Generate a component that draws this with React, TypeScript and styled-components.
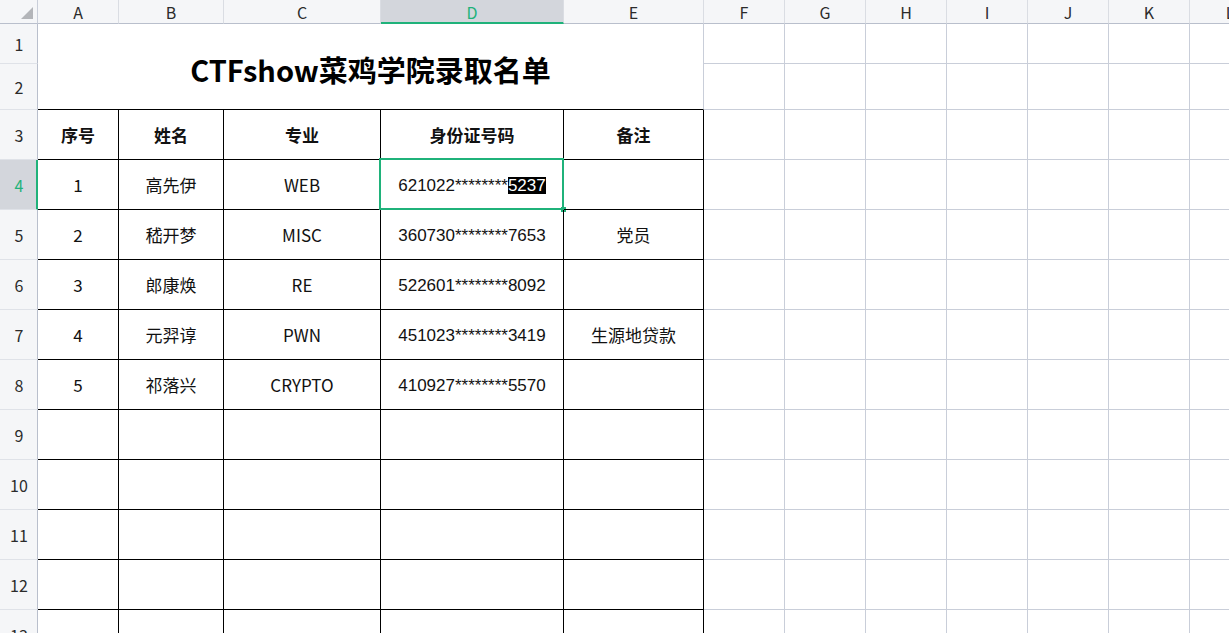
import React from "react";
import styled, { createGlobalStyle } from "styled-components";

const GREEN = "#1fb27a";
const GRID = "#c9ced9";
const HEAD_BG = "#f5f6f8";
const HEAD_ACTIVE = "#d3d6dc";

const GlobalStyle = createGlobalStyle`
  html, body { margin: 0; padding: 0; background: #fff; overflow: hidden; }
  body { font-family: "Noto Sans CJK SC", "Noto Sans", sans-serif; color: #000; }
  * { box-sizing: border-box; }
`;

const COLUMNS = [
  { key: "A", w: 81 },
  { key: "B", w: 105 },
  { key: "C", w: 157 },
  { key: "D", w: 183 },
  { key: "E", w: 140 },
  { key: "F", w: 81 },
  { key: "G", w: 81 },
  { key: "H", w: 81 },
  { key: "I", w: 81 },
  { key: "J", w: 81 },
  { key: "K", w: 81 },
  { key: "L", w: 81 },
];

const Sheet = styled.div`
  width: 1229px;
  height: 633px;
  overflow: hidden;
  display: grid;
  grid-template-columns: 38px ${COLUMNS.map((c) => `${c.w}px`).join(" ")};
  grid-template-rows: 24px 40px 46px repeat(11, 50px);
`;

const Corner = styled.div`
  background: ${HEAD_BG};
  border-right: 1px solid ${GRID};
  border-bottom: 1px solid #b9bfcc;
  display: flex;
  align-items: flex-end;
  justify-content: flex-end;
  padding: 0 4px 4px 0;
`;

const ColHeader = styled.div<{ $active?: boolean }>`
  background: ${(p) => (p.$active ? HEAD_ACTIVE : HEAD_BG)};
  border-right: 1px solid #dadde3;
  border-bottom: ${(p) => (p.$active ? `2px solid ${GREEN}` : "1px solid #b9bfcc")};
  color: ${(p) => (p.$active ? GREEN : "#2b2b2b")};
  font-size: 16px;
  display: flex;
  align-items: center;
  justify-content: center;
  padding-top: 1px;
  line-height: 1;
`;

const RowHeader = styled.div<{ $active?: boolean }>`
  background: ${(p) => (p.$active ? HEAD_ACTIVE : HEAD_BG)};
  border-right: ${(p) => (p.$active ? `2px solid ${GREEN}` : "1px solid #b9bfcc")};
  border-bottom: 1px solid #dfe2e8;
  color: ${(p) => (p.$active ? GREEN : "#2b2b2b")};
  font-size: 16px;
  display: flex;
  align-items: center;
  justify-content: center;
  padding-left: ${(p) => (p.$active ? "2px" : "1px")};
`;

const Cell = styled.div<{ $table?: boolean; $bold?: boolean }>`
  position: relative;
  border-right: 1px solid ${(p) => (p.$table ? "#000" : GRID)};
  border-bottom: 1px solid ${(p) => (p.$table ? "#000" : GRID)};
  display: flex;
  align-items: center;
  justify-content: center;
  font-size: 17px;
  font-weight: ${(p) => (p.$bold ? 700 : 400)};
  color: #111;
  white-space: nowrap;
`;

const IdText = styled.span`
  font-family: "Liberation Sans", "Noto Sans CJK SC", sans-serif;
  font-size: 17px;
  display: inline-flex;
  align-items: center;
  padding-top: 2px;
`;

const TitleCell = styled.div`
  grid-column: span 5;
  grid-row: span 2;
  border-right: 1px solid ${GRID};
  border-bottom: 1px solid #000;
  display: flex;
  align-items: center;
  justify-content: center;
  font-size: 29px;
  font-weight: 700;
  color: #000;
  padding-top: 4px;
`;

const Selection = styled.div`
  position: absolute;
  left: -2px;
  top: -2px;
  right: -1px;
  bottom: -1px;
  border: 2px solid ${GREEN};
  pointer-events: none;
`;

const Handle = styled.div`
  position: absolute;
  right: -4px;
  bottom: -4px;
  width: 5px;
  height: 5px;
  background: ${GREEN};
`;

const Highlight = styled.span`
  display: inline-block;
  background: #000;
  color: #fff;
  line-height: 17px;
  height: 17px;
`;

const HEADERS = ["序号", "姓名", "专业", "身份证号码", "备注"];

const DATA = [
  ["1", "高先伊", "WEB", "621022********5237", ""],
  ["2", "嵇开梦", "MISC", "360730********7653", "党员"],
  ["3", "郎康焕", "RE", "522601********8092", ""],
  ["4", "元羿谆", "PWN", "451023********3419", "生源地贷款"],
  ["5", "祁落兴", "CRYPTO", "410927********5570", ""],
];

const EXTRA_COLS = COLUMNS.slice(5);

function GridCells() {
  return (
    <>
      {EXTRA_COLS.map((c) => (
        <Cell key={c.key} />
      ))}
    </>
  );
}

export default function App() {
  const tableRows: string[][] = [];
  for (let i = 0; i < 10; i++) {
    tableRows.push(i < DATA.length ? DATA[i] : ["", "", "", "", ""]);
  }

  return (
    <>
      <GlobalStyle />
      <Sheet>
        <Corner>
          <svg width="12" height="12" viewBox="0 0 12 12">
            <polygon points="12,0 12,12 0,12" fill="#b3b5b9" />
          </svg>
        </Corner>
        {COLUMNS.map((c) => (
          <ColHeader key={c.key} $active={c.key === "D"}>
            {c.key}
          </ColHeader>
        ))}

        <RowHeader>1</RowHeader>
        <TitleCell>CTFshow菜鸡学院录取名单</TitleCell>
        <GridCells />

        <RowHeader>2</RowHeader>
        <GridCells />

        <RowHeader>3</RowHeader>
        {HEADERS.map((h) => (
          <Cell key={h} $table $bold>
            {h}
          </Cell>
        ))}
        <GridCells />

        {tableRows.map((row, i) => {
          const rowNum = i + 4;
          const active = rowNum === 4;
          return (
            <React.Fragment key={rowNum}>
              <RowHeader $active={active}>{rowNum}</RowHeader>
              {row.map((val, j) => (
                <Cell key={j} $table>
                  {j === 3 && val ? (
                    <IdText>
                      {active ? (
                        <>
                          {val.slice(0, -4)}
                          <Highlight>{val.slice(-4)}</Highlight>
                        </>
                      ) : (
                        val
                      )}
                    </IdText>
                  ) : (
                    val
                  )}
                  {active && j === 3 && (
                    <Selection>
                      <Handle />
                    </Selection>
                  )}
                </Cell>
              ))}
              <GridCells />
            </React.Fragment>
          );
        })}
      </Sheet>
    </>
  );
}
